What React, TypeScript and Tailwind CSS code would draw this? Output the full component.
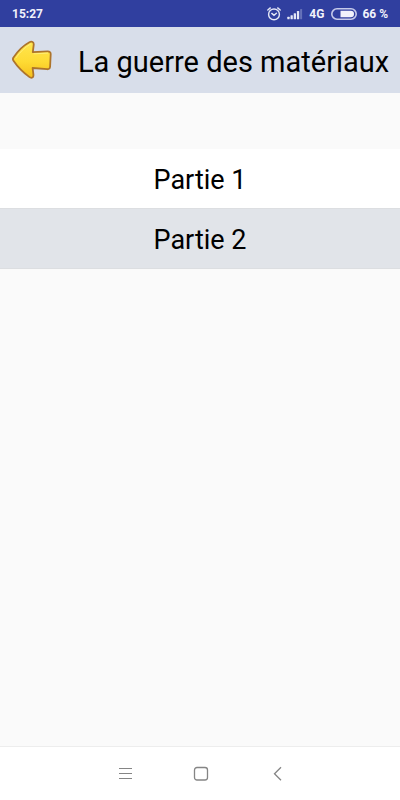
const parts = [
  { id: 1, title: 'Partie 1' },
  { id: 2, title: 'Partie 2' },
]

function AlarmIcon() {
  return (
    <svg width="14" height="14" viewBox="0 0 14 14" fill="none" stroke="#e4e7f6" strokeWidth="1.4" strokeLinecap="round">
      <circle cx="7" cy="7.4" r="5.4" />
      <path d="M0.8 3 3.3 0.9M13.200 3 10.700 0.900M4.800 6.400 7 8.300l2.400-2" />
    </svg>
  )
}

function SignalIcon() {
  return (
    <svg width="16" height="12" viewBox="0 0 16 12" fill="#e4e7f6">
      <rect x="0.3" y="8.7" width="2.300" height="2.600" rx="0.5" />
      <rect x="3.500" y="7.200" width="2.300" height="4.100" rx="0.5" />
      <rect x="6.700" y="5.200" width="2.300" height="6.100" rx="0.5" />
      <rect x="9.900" y="3" width="2.300" height="8.300" rx="0.5" />
      <rect x="13.100" y="1" width="2" height="10.300" rx="0.5" opacity="0.3" />
    </svg>
  )
}

function BatteryIcon() {
  return (
    <svg width="26" height="12" viewBox="0 0 26 12">
      <rect x="0.8" y="0.8" width="24.400" height="10.400" rx="5.200" fill="none" stroke="#c5caea" strokeWidth="1.600" />
      <path d="M9.500 2.700h10.200a3.300 3.300 0 0 1 0 6.600H9.500z" fill="#f1f2fb" />
    </svg>
  )
}

function BackArrow() {
  return (
    <svg width="40" height="40" viewBox="0 0 40 40">
      <defs>
        <linearGradient id="gold" x1="0" y1="0" x2="0" y2="1">
          <stop offset="0" stopColor="#ffe650" />
          <stop offset="0.55" stopColor="#fedb34" />
          <stop offset="1" stopColor="#f5bf1c" />
        </linearGradient>
      </defs>
      <path
        d="M1.300 17.800C5.500 11.200 11.500 5.400 17.400 2.200c2.400-1.300 4.600 0 4.300 2.600l-.9 7.400 14.700-.8c2.200-.1 3.300.9 3.200 2.800l-.6 12.300c-.1 2-1.200 2.900-3 2.700L20.600 28l.8 6.400c.4 3.200-1.800 4.300-4.200 2.500C11.500 32.700 5.500 26.800 1.500 20.800c-.7-1-.8-2-.2-3z"
        fill="url(#gold)"
        stroke="#ad742c"
        strokeWidth="1.800"
        strokeLinejoin="round"
      />
      <path d="M4 17.800C8 12 13 7.200 18.400 4.200M22 13.800l13.600-.7" fill="none" stroke="#ffee78" strokeWidth="1" strokeLinecap="round" />
    </svg>
  )
}

function StatusBar() {
  return (
    <div className="flex h-[27px] items-center justify-between bg-[#303f9f] px-3 text-[12px] font-bold text-[#f1f2fb]">
      <span>15:27</span>
      <div className="flex items-center">
        <AlarmIcon />
        <span className="ml-[6px]"><SignalIcon /></span>
        <span className="ml-[6px]">4G</span>
        <span className="ml-[7px]"><BatteryIcon /></span>
        <span className="ml-[5px]">66 %</span>
      </div>
    </div>
  )
}

function NavBar() {
  return (
    <nav className="flex h-[54px] items-center justify-center gap-[60px] border-t border-[#ededed] bg-white pl-px text-[#858585]">
      <button type="button" aria-label="Menu">
        <svg width="16" height="16" viewBox="0 0 16 16" fill="none" stroke="currentColor" strokeWidth="1.200">
          <path d="M2 2.500h13M2 7.500h13M2 12.500h13" />
        </svg>
      </button>
      <button type="button" aria-label="Accueil">
        <svg width="16" height="16" viewBox="0 0 16 16" fill="none" stroke="currentColor" strokeWidth="1.300">
          <rect x="1.500" y="1.500" width="13" height="12.500" rx="2.500" />
        </svg>
      </button>
      <button type="button" aria-label="Précédent">
        <svg width="16" height="16" viewBox="0 0 16 16" fill="none" stroke="currentColor" strokeWidth="1.300">
          <path d="M12 1.300 5.500 7.700 12 14.200" />
        </svg>
      </button>
    </nav>
  )
}

export default function App() {
  return (
    <div className="flex min-h-screen flex-col bg-[#fafafa] font-['Roboto',sans-serif] text-black">
      <StatusBar />

      <header className="flex h-[66px] items-center bg-[#d8deea] pl-3">
        <button type="button" aria-label="Retour">
          <BackArrow />
        </button>
        <h1 className="ml-[26px] whitespace-nowrap pt-[3px] text-[29px] leading-9">La guerre des matériaux</h1>
      </header>

      <main className="flex-1 pt-14">
        <ul className="text-center text-[27px] leading-9">
          {parts.map((part) => (
            <li key={part.id} className="border-b border-[#dcdee1] odd:bg-white even:bg-[#e1e4e9]">
              <button type="button" className="w-full pt-[13px] pb-[10px]">{part.title}</button>
            </li>
          ))}
        </ul>
      </main>

      <NavBar />
    </div>
  )
}
